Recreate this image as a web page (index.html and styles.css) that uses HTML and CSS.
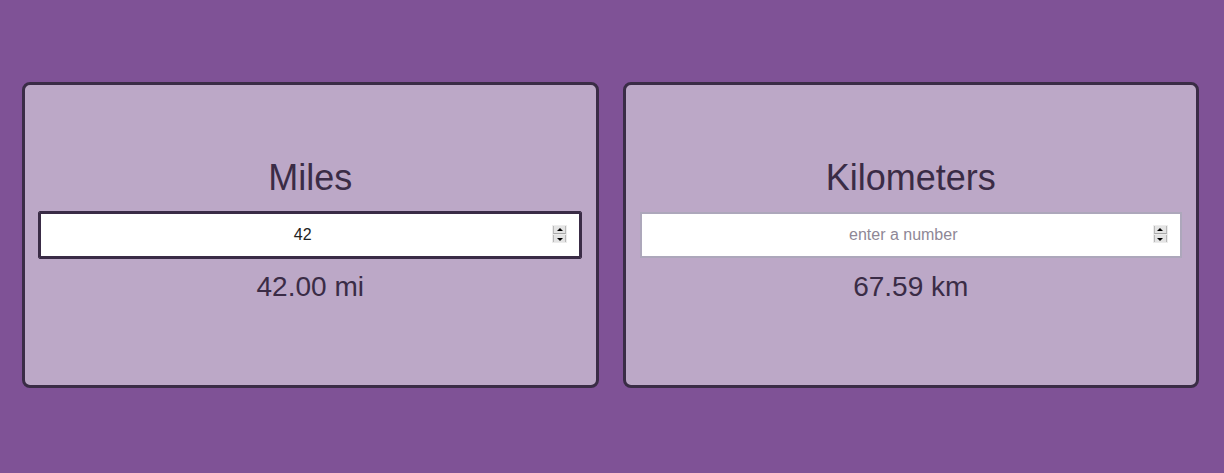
FILE: index.html
```html
<!DOCTYPE html>
<html lang="en">
<head>
<meta charset="utf-8">
<title>Miles / Kilometers</title>
<link rel="stylesheet" href="styles.css">
</head>
<body>
<main class="converter">
  <section class="card">
    <h2 class="card-title">Miles</h2>
    <div class="field">
      <input class="num-input is-focused" type="number" value="42" placeholder="enter a number">
      <span class="spin" aria-hidden="true"><span class="spin-up"></span><span class="spin-down"></span></span>
    </div>
    <p class="card-result">42.00 mi</p>
  </section>
  <section class="card">
    <h2 class="card-title">Kilometers</h2>
    <div class="field">
      <input class="num-input" type="number" placeholder="enter a number">
      <span class="spin" aria-hidden="true"><span class="spin-up"></span><span class="spin-down"></span></span>
    </div>
    <p class="card-result">67.59 km</p>
  </section>
</main>
</body>
</html>
```
FILE: styles.css
```css
html, body {
  margin: 0;
  padding: 0;
  height: 100%;
}
body {
  background: #7f5296;
  font-family: "Liberation Sans", Arial, sans-serif;
  color: #3a2c46;
}
.converter {
  display: flex;
  gap: 24px;
  padding: 82px 25px 0 22px;
}
.card {
  flex: 1 1 0;
  height: 306px;
  box-sizing: border-box;
  border: 3px solid #3a2c46;
  border-radius: 8px;
  background: #bca8c7;
  display: flex;
  flex-direction: column;
  align-items: center;
  justify-content: center;
  padding-bottom: 10px;
}
.card-title {
  margin: 0 0 14px;
  font-size: 36px;
  line-height: 41px;
  font-weight: normal;
}
.field {
  position: relative;
  width: 95%;
}
.num-input {
  display: block;
  width: 100%;
  box-sizing: border-box;
  height: 46px;
  border: 2px solid #ada7bb;
  padding: 12px 27px 12px 12px;
  font-family: "Liberation Sans", Arial, sans-serif;
  font-size: 16px;
  text-align: center;
  color: #222;
  background: #fff;
  border-radius: 0;
  outline: none;
  -moz-appearance: textfield;
}
.num-input::-webkit-inner-spin-button,
.num-input::-webkit-outer-spin-button {
  -webkit-appearance: none;
  margin: 0;
}
.num-input::placeholder {
  color: #8e8796;
}
.num-input.is-focused {
  border-color: #3a2c46;
  outline: 1px solid #3a2c46;
  border-radius: 1px;
}
.spin {
  position: absolute;
  right: 14px;
  top: 13px;
  width: 15px;
  height: 18px;
  box-sizing: border-box;
  border: 1px solid #ececec;
  background: #ececec;
  display: flex;
  flex-direction: column;
  gap: 1px;
}
.spin-up,
.spin-down {
  flex: 1;
  position: relative;
  background: #e4e4e4;
  border-left: 1px solid #b9b9b9;
  border-right: 1px solid #b9b9b9;
}
.spin-up {
  border-bottom: 1px solid #a8a8a8;
}
.spin-up::after,
.spin-down::after {
  content: "";
  position: absolute;
  left: 50%;
  top: 50%;
  margin-left: -3px;
  border-left: 3px solid transparent;
  border-right: 3px solid transparent;
}
.spin-up::after {
  margin-top: -2px;
  border-bottom: 3px solid #000;
}
.spin-down::after {
  margin-top: -1px;
  border-top: 3px solid #000;
}
.card-result {
  margin: 13px 0 0;
  font-size: 28px;
  line-height: 32px;
}
```
